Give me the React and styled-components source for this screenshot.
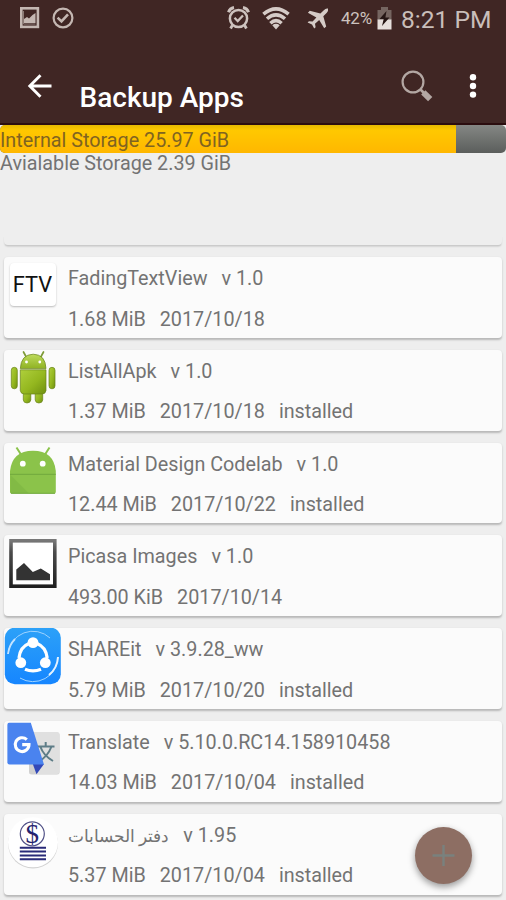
import React from "react";
import styled, { createGlobalStyle } from "styled-components";

const apps = [
  { icon: "ftv", name: "FadingTextView", version: "v 1.0", size: "1.68 MiB", date: "2017/10/18" },
  { icon: "robot", name: "ListAllApk", version: "v 1.0", size: "1.37 MiB", date: "2017/10/18", installed: true },
  { icon: "head", name: "Material Design Codelab", version: "v 1.0", size: "12.44 MiB", date: "2017/10/22", installed: true },
  { icon: "picture", name: "Picasa Images", version: "v 1.0", size: "493.00 KiB", date: "2017/10/14" },
  { icon: "share", name: "SHAREit", version: "v 3.9.28_ww", size: "5.79 MiB", date: "2017/10/20", installed: true },
  { icon: "translate", name: "Translate", version: "v 5.10.0.RC14.158910458", size: "14.03 MiB", date: "2017/10/04", installed: true },
  { icon: "ledger", name: "دفتر الحسابات", rtl: true, version: "v 1.95", size: "5.37 MiB", date: "2017/10/04", installed: true },
];

export default () => {
  return (
    <Screen>
      <GlobalStyle />
      <Header>
        <StatusBar>
          <StatusGroup>
            <ScreenshotIcon />
            <CheckIcon />
          </StatusGroup>
          <StatusGroup>
            <AlarmIcon />
            <WifiIcon />
            <PlaneIcon />
            <Battery>42%</Battery>
            <BatteryIcon />
            <Clock>8:21 PM</Clock>
          </StatusGroup>
        </StatusBar>
        <Toolbar>
          <BackIcon />
          <Title>Backup Apps</Title>
          <SearchIcon />
          <MoreIcon />
        </Toolbar>
      </Header>
      <Storage>
        <StorageBar>
          <StorageFill style={{ width: `${(456 / 506) * 100}%` }}>
            Internal Storage 25.97 GiB
          </StorageFill>
        </StorageBar>
        <Available>Avialable Storage 2.39 GiB</Available>
        <StorageEdge />
      </Storage>
      <List>
        {apps.map((app) => {
          const Icon = icons[app.icon];
          return (
            <Card key={app.name}>
              <IconBox>
                <Icon />
              </IconBox>
              <Info>
                <Line>
                  <Name dir={app.rtl ? "rtl" : "ltr"} $rtl={app.rtl}>
                    {app.name}
                  </Name>
                  <span>{app.version}</span>
                </Line>
                <Line>
                  <span>{app.size}</span>
                  <span>{app.date}</span>
                  {app.installed && <span>installed</span>}
                </Line>
              </Info>
            </Card>
          );
        })}
      </List>
      <AddButton aria-label="Add">
        <svg width="23" height="23" viewBox="0 0 23 23">
          <path d="M11.5 1V22M.5 11.5H22.5" stroke="#79817e" strokeWidth="2.4" />
        </svg>
      </AddButton>
    </Screen>
  );
};

const ScreenshotIcon = () => (
  <svg width="20" height="22" viewBox="0 0 20 22">
    <rect x="1.3" y="1.3" width="16.6" height="18.6" fill="none" stroke="#c4b7b2" strokeWidth="2.6" />
    <path d="M4 16V12L7 10L9 11.5L12.5 8L15.5 6V16Z" fill="#c4b7b2" />
    <path d="M3.5 4V17H15.5" fill="none" stroke="#8c7b76" strokeWidth="1" />
  </svg>
);

const CheckIcon = () => (
  <svg width="22" height="22" viewBox="0 0 22 22">
    <circle cx="11" cy="11" r="9.4" fill="none" stroke="#c4b7b2" strokeWidth="2.2" />
    <path d="M5.6 10.6L9.5 14.4L16 7.4" fill="none" stroke="#c4b7b2" strokeWidth="2.6" />
  </svg>
);

const AlarmIcon = () => (
  <svg width="23" height="24" viewBox="0 0 23 24">
    <g fill="none" stroke="#cdc2be">
      <circle cx="11.5" cy="12.5" r="8.6" strokeWidth="2.5" />
      <path d="M7.5 11.8L10.7 15L16 9.5" strokeWidth="2.3" />
      <path d="M1.5 6.2A7 7 0 0 1 7 1.6M21.5 6.2A7 7 0 0 0 16 1.6" strokeWidth="3" />
      <path d="M5.3 19.3L3.6 22.5M17.7 19.3L19.4 22.5" strokeWidth="2.8" />
    </g>
  </svg>
);

const WifiIcon = () => (
  <svg width="28" height="23" viewBox="0 0 28 23">
    <g fill="none" stroke="#d5cbc7" strokeWidth="3.5">
      <path d="M1.4 7.2Q14 -3.4 26.6 7.2" />
      <path d="M5 11.8Q14 4 23 11.8" />
      <path d="M8.4 16.2Q14 11 19.6 16.2" />
    </g>
    <path d="M10.3 18.2Q14 15.5 17.7 18.2L14 22.5Z" fill="#d5cbc7" />
  </svg>
);

const PlaneIcon = () => (
  <svg width="22" height="21" viewBox="0 0 22 21" style={{ marginLeft: 17 }}>
    <path
      d="M21 0.6Q18.8 0 16.8 2.2L13.4 5.4L2.8 2.8L.9 4.8L9.4 9.5L5.6 13.6L1.9 13.2L.6 14.6L5 16.6L7.2 20.6L8.6 19.2L8 15.8L12.2 12L17.2 20.3L19.2 18.4L16.3 8.3L19.8 4.8Q21.6 2.6 21 .6Z"
      fill="#d5cbc7"
    />
  </svg>
);

const BatteryIcon = () => (
  <svg width="15" height="23" viewBox="0 0 15 23" style={{ marginLeft: 2 }}>
    <path d="M4 0H11V3H14.5V13H.5V3H4Z" fill="#756560" />
    <path d="M.5 12.5H14.5V22.5H.5Z" fill="#e6dfdc" />
    <path d="M9.5 4L2.5 12H6.7L5 19L12.5 10.5H8.4Z" fill="#251614" />
  </svg>
);

const BackIcon = () => (
  <svg width="26" height="26" viewBox="0 0 26 26">
    <path d="M24.5 13H3M13.5 2.2L2.8 13L13.5 23.8" fill="none" stroke="#fff" strokeWidth="2.9" />
  </svg>
);

const SearchIcon = () => (
  <svg width="34" height="34" viewBox="0 0 34 34">
    <circle cx="13" cy="13" r="10.4" fill="none" stroke="#b3a7a3" strokeWidth="2.2" />
    <path d="M20.5 20.5L24 24" stroke="#b3a7a3" strokeWidth="2.6" />
    <path d="M23.3 23.3L30.2 30.2" stroke="#b3a7a3" strokeWidth="6" />
  </svg>
);

const MoreIcon = () => (
  <svg width="8" height="26" viewBox="0 0 8 26" style={{ marginLeft: 35 }}>
    <circle cx="4" cy="4.3" r="3.2" fill="#fff" />
    <circle cx="4" cy="13" r="3.2" fill="#fff" />
    <circle cx="4" cy="21.6" r="3.2" fill="#fff" />
  </svg>
);

const RobotIcon = () => (
  <svg width="56" height="56" viewBox="0 0 56 56">
    <defs>
      <linearGradient id="robotBody" x1="0" y1="0" x2="1" y2="1">
        <stop offset="0" stopColor="#afcf3c" />
        <stop offset=".55" stopColor="#94b71f" />
        <stop offset="1" stopColor="#6f9010" />
      </linearGradient>
      <linearGradient id="robotHead" x1="0" y1="0" x2="0" y2="1">
        <stop offset="0" stopColor="#bedb5d" />
        <stop offset="1" stopColor="#8fb222" />
      </linearGradient>
    </defs>
    <path d="M19.5 2L22.5 7.5M39.5 2L36.5 7.5" stroke="#7e9b38" strokeWidth="1.7" strokeLinecap="round" />
    <g stroke="#67831a" strokeWidth=".7">
      <rect x="7.3" y="17.3" width="6" height="21.5" rx="3" fill="url(#robotBody)" />
      <rect x="45" y="17.3" width="6" height="21.5" rx="3" fill="url(#robotBody)" />
      <path d="M19.3 41H26.8V50Q26.3 53 23 53T19.3 50Z" fill="url(#robotBody)" />
      <path d="M31.2 41H38.7V50Q38.3 53 34.9 53T31.2 50Z" fill="url(#robotBody)" />
      <path d="M16.3 18.6Q17 4.5 29.2 4.2Q41.5 4.5 42 18.6Z" fill="url(#robotHead)" />
      <path d="M16.3 19.8H42V40.5Q41.5 44 38 44H20.3Q16.8 44 16.3 40.5Z" fill="url(#robotBody)" />
    </g>
    <circle cx="22.5" cy="12" r="1.4" fill="#fff" />
    <circle cx="35.8" cy="12" r="1.4" fill="#fff" />
  </svg>
);

const HeadIcon = () => (
  <svg width="56" height="56" viewBox="0 2 56 56">
    <path d="M12.5 6.5L17 13.5M45.5 6.5L41 13.5" stroke="#8bc34a" strokeWidth="2" />
    <path d="M6 51V30Q8.3 9.8 29 9.8T51.8 30V51Q51.8 52.5 49.8 52.5H8Q6 52.5 6 51Z" fill="#8bc34a" />
    <path d="M6 33.3H51.8" stroke="#70a83c" strokeWidth="1" />
    <path d="M6.5 34L24.5 52H6.5Z" fill="#7fb643" opacity=".7" />
    <path d="M7 52.3H51" stroke="#70a83c" strokeWidth="1" />
    <circle cx="18.8" cy="22.7" r="2.9" fill="#fff" />
    <circle cx="38.7" cy="22.7" r="2.9" fill="#fff" />
  </svg>
);

const PictureIcon = () => (
  <svg width="56" height="56" viewBox="0 0 56 56">
    <defs>
      <linearGradient id="frame" x1="0" y1="0" x2="0" y2="1">
        <stop offset="0" stopColor="#777" />
        <stop offset=".25" stopColor="#4b4b4b" />
        <stop offset="1" stopColor="#202020" />
      </linearGradient>
    </defs>
    <rect x="7" y="5.8" width="43.8" height="45.4" fill="#fff" stroke="url(#frame)" strokeWidth="3.6" />
    <path d="M12.3 45.3V34.5L20 28L28.8 37L36.8 33.5L46 39.3V45.3Z" fill="#333" />
  </svg>
);

const ShareIcon = () => (
  <svg width="58" height="58" viewBox="0 0 58 58">
    <defs>
      <linearGradient id="shareBg" x1="0" y1="0" x2="0" y2="1">
        <stop offset="0" stopColor="#2ca1f8" />
        <stop offset="1" stopColor="#1686ff" />
      </linearGradient>
    </defs>
    <rect x=".8" y="-.3" width="56" height="56.5" rx="10" fill="url(#shareBg)" />
    <g fill="none" stroke="#fff">
      <path d="M4 26A25 25 0 0 1 46 10" stroke="#9ed3ff" strokeWidth="1" />
      <path d="M4 26A25 25 0 0 1 11 11" stroke="#c3e3ff" strokeWidth="1.8" />
      <path d="M54 29A25 25 0 0 1 16 50" stroke="#9ed3ff" strokeWidth="1" />
      <path d="M54 29A25 25 0 0 1 45 47" stroke="#e4f2ff" strokeWidth="2" />
      <path d="M15 30Q16 19 25 15.5M33 15.5Q42 19 43.2 30M21 41.3Q29 44.6 37 41.3" strokeWidth="3.3" />
    </g>
    <circle cx="29" cy="14.6" r="5.4" fill="#fff" />
    <circle cx="16.8" cy="34.7" r="5.4" fill="#fff" />
    <circle cx="41.3" cy="34.7" r="5.4" fill="#fff" />
  </svg>
);

const TranslateIcon = () => (
  <svg width="58" height="56" viewBox="0 0 58 56">
    <rect x="25" y="11.5" width="30.5" height="42" rx="2.5" fill="#d0d0d0" />
    <path d="M29 11H53Q55.5 11 55.5 13.5V50.5Q55.5 53 53 53H33Z" fill="#e0e0e0" />
    <path d="M33 25.5H50.5M41.7 21V25.5M36.5 26Q39.5 34.5 49 40M47.3 26Q43.5 36 34 41" fill="none" stroke="#5e7d87" strokeWidth="2" />
    <path d="M28.8 43L32.5 53.2L40 43Z" fill="#3349b8" />
    <path d="M5 1.8H26.8L40 43.5H5.5Q3.4 43.5 3.4 41.5V3.8Q3.4 1.8 5 1.8Z" fill="#4a83ef" />
    <path d="M22.8 18.6A6.9 6.9 0 1 0 25 23.6H18.2" fill="none" stroke="#fff" strokeWidth="3.1" />
  </svg>
);

const LedgerIcon = () => (
  <svg width="56" height="58" viewBox="0 0 56 58">
    <circle cx="29" cy="29.5" r="25" fill="#d2d2d2" />
    <circle cx="29" cy="28.3" r="25" fill="#fff" />
    <circle cx="28.3" cy="19.8" r="12" fill="#fff" stroke="#505086" strokeWidth="1.2" />
    <text x="28.3" y="28.6" textAnchor="middle" fontFamily="Liberation Serif, serif" fontSize="27" fill="#25246f">
      $
    </text>
    <path d="M15.8 33.7H42M15.8 37.6H42M15.8 41.4H42M15.8 45.2H42" stroke="#292a78" strokeWidth="2" />
  </svg>
);

const FtvIcon = () => <TextTile>FTV</TextTile>;

const icons = {
  ftv: FtvIcon,
  robot: RobotIcon,
  head: HeadIcon,
  picture: PictureIcon,
  share: ShareIcon,
  translate: TranslateIcon,
  ledger: LedgerIcon,
};

const GlobalStyle = createGlobalStyle`
  * {
    box-sizing: border-box;
  }

  body {
    margin: 0;
    background: #eee;
  }

  svg {
    display: block;
    flex-shrink: 0;
  }
`;

const Screen = styled.div`
  position: relative;
  width: 506px;
  height: 900px;
  overflow: hidden;
  background: #eee;
  color: #737373;
  font-family: Roboto, "Noto Sans", sans-serif;
  font-size: 19.75px;
`;

const Header = styled.header`
  height: 125px;
  background: #402624;
  border-bottom: 2px solid #2b0d0f;
`;

const StatusBar = styled.div`
  display: flex;
  justify-content: space-between;
  height: 36px;
  padding: 0 14px 0 20px;
`;

const StatusGroup = styled.div`
  display: flex;
  align-items: center;

  svg + svg:nth-child(2) {
    margin-left: 12px;
  }
`;

const Battery = styled.span`
  width: 34px;
  margin-left: 12px;
  color: #cdc2be;
  font-size: 17px;
  letter-spacing: -0.2px;
  white-space: nowrap;
`;

const Clock = styled.span`
  width: 91px;
  margin: 2px 0 0 9px;
  color: #c9beba;
  font-size: 24.6px;
  white-space: nowrap;
`;

const Toolbar = styled.div`
  display: flex;
  align-items: center;
  height: 100px;
  padding: 0 29px 0 27px;
`;

const Title = styled.h1`
  flex: 1;
  margin: 24px 0 0 26.5px;
  color: #fff;
  font-size: 28px;
  font-weight: 500;
  line-height: 34px;
`;

const Storage = styled.section`
  height: 132px;
`;

const StorageBar = styled.div`
  height: 28px;
  overflow: hidden;
  border-radius: 5px;
  background: linear-gradient(#858784, #5b5e5c);
`;

const StorageFill = styled.div`
  height: 28px;
  background: linear-gradient(#e4b800, #ffc800 20%, #ffb700);
  color: #806421;
  line-height: 32px;
  white-space: nowrap;
`;

const Available = styled.div`
  height: 82px;
  line-height: 22px;
`;

const StorageEdge = styled.div`
  height: 10px;
  margin: 0 4px;
  border-radius: 0 0 4px 4px;
  background: #eee;
  box-shadow: 0 2px 1.5px -0.5px #c6c6c6;
`;

const List = styled.main`
  display: grid;
  grid-auto-rows: 80.8px;
  gap: 12px;
  padding: 0 4px;
`;

const Card = styled.article`
  display: flex;
  border-radius: 4px;
  background: #fbfbfb;
  box-shadow: 0 1.5px 2px #b8b8b8;
`;

const IconBox = styled.div`
  width: 64px;
`;

const Info = styled.div`
  padding-top: 10px;
`;

const Line = styled.div`
  display: flex;
  gap: 14px;
  height: 40.5px;
  line-height: 24px;
  white-space: nowrap;
`;

const Name = styled.span`
  font-size: ${(props) => (props.$rtl ? "17.3px" : "19.75px")};
`;

const TextTile = styled.div`
  display: flex;
  align-items: center;
  justify-content: center;
  width: 46px;
  height: 43px;
  margin: 6px 0 0 5.5px;
  border-radius: 4px;
  background: #fff;
  box-shadow: 0 1px 2px #bbb;
  color: #111;
  font-size: 21.8px;
`;

const AddButton = styled.button`
  position: absolute;
  left: 415px;
  top: 827px;
  display: flex;
  align-items: center;
  justify-content: center;
  width: 57px;
  height: 57px;
  padding: 0;
  border: 0;
  border-radius: 50%;
  background: #8d6e63;
  box-shadow: 0 3px 7px rgba(0, 0, 0, 0.4);
`;
